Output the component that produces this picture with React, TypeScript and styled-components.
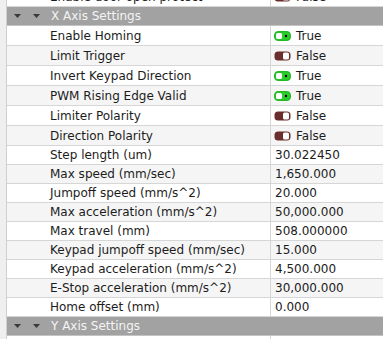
import styled, { createGlobalStyle } from "styled-components";

type Setting = {
	label: string;
	value: string;
	toggle?: boolean;
};

const xAxis: Setting[] = [
	{ label: "Enable Homing", value: "True", toggle: true },
	{ label: "Limit Trigger", value: "False", toggle: true },
	{ label: "Invert Keypad Direction", value: "True", toggle: true },
	{ label: "PWM Rising Edge Valid", value: "True", toggle: true },
	{ label: "Limiter Polarity", value: "False", toggle: true },
	{ label: "Direction Polarity", value: "False", toggle: true },
	{ label: "Step length (um)", value: "30.022450" },
	{ label: "Max speed (mm/sec)", value: "1,650.000" },
	{ label: "Jumpoff speed (mm/s^2)", value: "20.000" },
	{ label: "Max acceleration (mm/s^2)", value: "50,000.000" },
	{ label: "Max travel (mm)", value: "508.000000" },
	{ label: "Keypad jumpoff speed (mm/sec)", value: "15.000" },
	{ label: "Keypad acceleration (mm/s^2)", value: "4,500.000" },
	{ label: "E-Stop acceleration (mm/s^2)", value: "30,000.000" },
	{ label: "Home offset (mm)", value: "0.000" },
];

const GlobalStyle = createGlobalStyle`
	html, body {
		margin: 0;
		padding: 0;
		background: #ffffff;
	}
	body {
		font-family: "DejaVu Sans", "Liberation Sans", sans-serif;
		font-size: 12px;
		color: #1c1c1c;
	}
`;

function Toggle({ on }: { on: boolean }) {
	if (on) {
		return (
			<ToggleIcon width="17" height="10" viewBox="0 0 17 10">
				<rect x="0.75" y="0.75" width="15.5" height="8.5" rx="3.5" fill="#2ecc2e" stroke="#22bb22" strokeWidth="1.5" />
				<rect x="2" y="2" width="6" height="6" rx="1.5" fill="#ffffff" />
				<circle cx="12" cy="5" r="1.2" fill="#000000" />
			</ToggleIcon>
		);
	}
	return (
		<ToggleIcon width="17" height="10" viewBox="0 0 17 10">
			<rect x="0.5" y="0.5" width="16" height="9" rx="3.5" fill="#6b2c2c" />
			<rect x="9" y="1.5" width="6" height="7" rx="1.5" fill="#ffffff" />
		</ToggleIcon>
	);
}

function Arrow() {
	return (
		<ArrowIcon width="7" height="4" viewBox="0 0 7 4">
			<path d="M0 0 L7 0 L3.5 4 Z" fill="#3a3a3a" />
		</ArrowIcon>
	);
}

function Row({ item, shade }: { item: Setting; shade: boolean }) {
	return (
		<DataRow shade={shade} tall={!!item.toggle}>
			<LabelCell>{item.label}</LabelCell>
			<ValueCell toggle={!!item.toggle}>
				{item.toggle && <Toggle on={item.value === "True"} />}
				<span>{item.value}</span>
			</ValueCell>
		</DataRow>
	);
}

function GroupHeader({ title }: { title: string }) {
	return (
		<Header>
			<Arrow />
			<Arrow />
			<HeaderTitle>{title}</HeaderTitle>
		</Header>
	);
}

export default function App() {
	return (
		<>
			<GlobalStyle />
			<Viewport>
				<Gutter />
				<Tree>
					<List>
						<Row item={{ label: "Enable door open protect", value: "False", toggle: true }} shade={false} />
						<GroupHeader title="X Axis Settings" />
						{xAxis.map((item, i) => (
							<Row key={item.label} item={item} shade={i % 2 === 1} />
						))}
						<GroupHeader title="Y Axis Settings" />
						<Row item={{ label: "", value: "" }} shade={false} />
					</List>
				</Tree>
			</Viewport>
		</>
	);
}

const Viewport = styled.div`
	width: 383px;
	height: 339px;
	display: flex;
	overflow: hidden;
	background: #ffffff;
`;

const Gutter = styled.div`
	width: 6px;
	flex-shrink: 0;
	background: #efefef;
	border-right: 1px solid #cfcfcf;
`;

const Tree = styled.div`
	flex: 1;
	overflow: hidden;
`;

const List = styled.div`
	display: flex;
	flex-direction: column;
	margin-top: -13px;
`;

const DataRow = styled.div<{ shade: boolean; tall: boolean }>`
	display: grid;
	grid-template-columns: 264px 1fr;
	height: ${({ tall }) => (tall ? "20px" : "19px")};
	box-sizing: border-box;
	border-bottom: 1px solid #d6d6d6;
	background: ${({ shade }) => (shade ? "#f5f5f5" : "#ffffff")};
	flex-shrink: 0;
`;

const LabelCell = styled.div`
	display: flex;
	align-items: center;
	padding-left: 43px;
	box-sizing: border-box;
	border-right: 1px solid #d6d6d6;
	white-space: nowrap;
	overflow: hidden;
`;

const ValueCell = styled.div<{ toggle: boolean }>`
	display: flex;
	align-items: center;
	gap: 5px;
	padding-left: ${({ toggle }) => (toggle ? "3px" : "4px")};
	white-space: nowrap;
	overflow: hidden;
`;

const ToggleIcon = styled.svg`
	display: block;
	flex-shrink: 0;
`;

const Header = styled.div`
	display: flex;
	align-items: center;
	height: 19px;
	box-sizing: border-box;
	border-bottom: 1px solid #c4c4c4;
	background: #a2a2a2;
	padding-left: 7px;
	gap: 12px;
	flex-shrink: 0;
`;

const ArrowIcon = styled.svg`
	display: block;
	flex-shrink: 0;
`;

const HeaderTitle = styled.span`
	color: #f4f4f4;
	margin-left: -1px;
`;
